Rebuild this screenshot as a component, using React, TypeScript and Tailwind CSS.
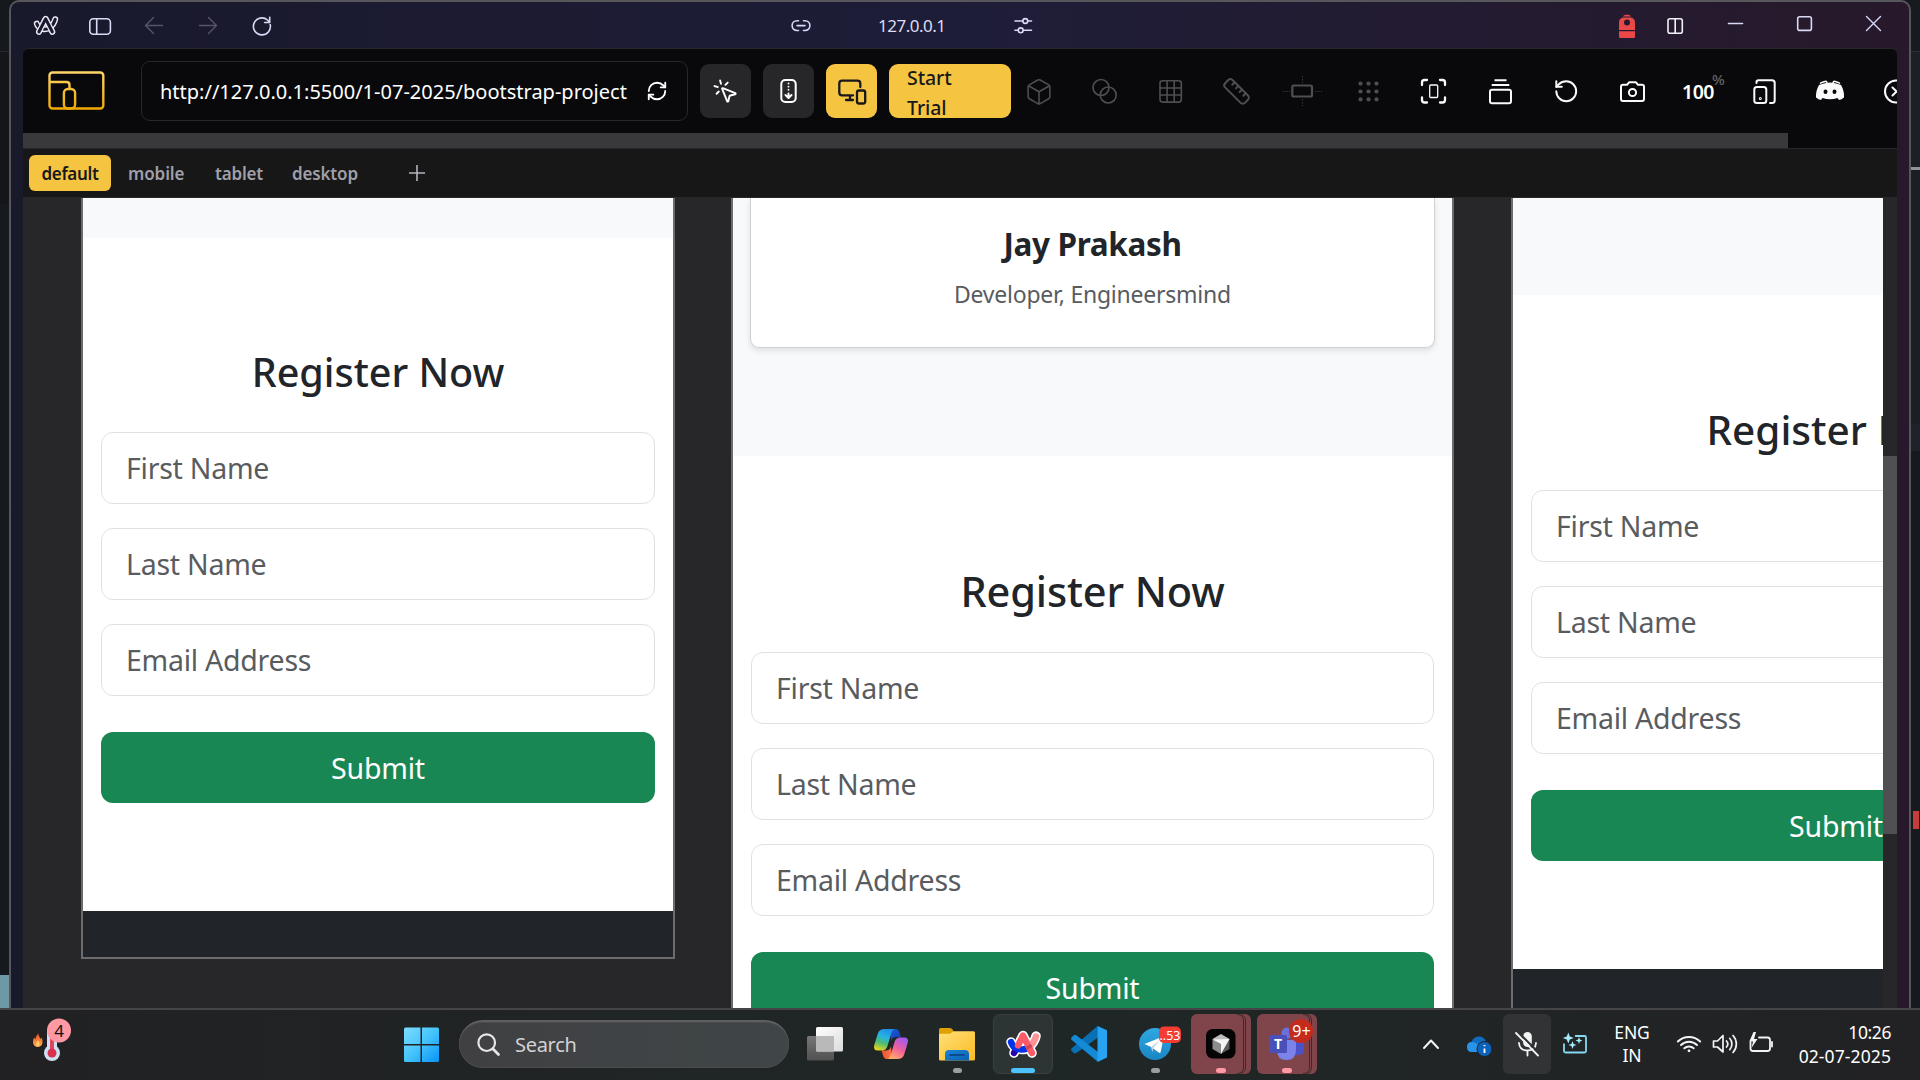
import React from "react";
import { Box, Ruler, RotateCcw, RefreshCw, MousePointerClick } from "lucide-react";

type GlyphProps = { x: number; className?: string; w: number; children: React.ReactNode };

/* ---------- title bar ---------- */

function TitleGlyph({ x, w, className = "", children }: GlyphProps) {
  return (
    <svg className={`h-[46px] shrink-0 ${className}`} viewBox={`${x} 2 ${w} 46`} fill="none" stroke="#d9d9f5" strokeWidth={1.6} strokeLinecap="round" strokeLinejoin="round">
      {children}
    </svg>
  );
}

const ARC_PATHS = ["M1011 1042C1013 1049 1023 1052 1029 1047C1033 1044 1035 1040 1036 1036", "M1014 1053L1023 1035.500L1032 1053"];

function TitleBar() {
  return (
    <div className="flex h-[46px] shrink-0 items-center pl-2">
      <TitleGlyph x={19} w={54} className="w-[54px]">
        <g transform="translate(46 25.500) scale(.74) translate(-1023.500 -1044.500)">
          {ARC_PATHS.map((d) => <path key={d} d={d} strokeWidth={8} stroke="#e8e8f2" />)}
          <path d={ARC_PATHS[0]} strokeWidth={4.200} stroke="#1a1930" />
          <path d={ARC_PATHS[1]} strokeWidth={7.600} stroke="#e8e8f2" />
          <path d={ARC_PATHS[1]} strokeWidth={4.200} stroke="#1a1930" />
        </g>
      </TitleGlyph>
      <TitleGlyph x={73} w={54} className="w-[54px]">
        <rect x={89.800} y={18.800} width={20.600} height={15.400} rx={3.500} />
        <path d="M96.700 19V34" />
      </TitleGlyph>
      <TitleGlyph x={127} w={54} className="w-[54px]">
        <path d="M162.500 25.500H145.500M153.500 17.500L145.500 25.500L153.500 33.500" stroke="#55546c" strokeWidth={1.400} />
      </TitleGlyph>
      <TitleGlyph x={181} w={54} className="w-[54px]">
        <path d="M199.500 25.500H216.500M208.500 17.500L216.500 25.500L208.500 33.500" stroke="#55546c" strokeWidth={1.400} />
      </TitleGlyph>
      <TitleGlyph x={235} w={54} className="w-[54px]">
        <path d="M270.200 24.500A8.500 8.500 0 1 1 267.500 20L269.500 22.300M269.700 17.300V22.500H264.600" />
      </TitleGlyph>
      <TitleGlyph x={785} w={32} className="ml-[496px] w-[32px]">
        <path d="M798.500 20.700H797A4.900 4.900 0 0 0 797 30.500H798.500M803.500 20.700H805A4.900 4.900 0 0 1 805 30.500H803.500M797 25.600H805" />
      </TitleGlyph>
      <span className="ml-[61px] w-[69px] font-['Noto_Sans'] text-[17px] leading-none tracking-[-0.5px] text-[#dcdcf4]">127.0.0.1</span>
      <TitleGlyph x={1007} w={32} className="ml-[60px] w-[32px]">
        <path d="M1015 21H1022.500M1028 21H1031.500M1015 30.300H1018M1023.500 30.300H1031.500" />
        <circle cx={1025.300} cy={21} r={2.400} />
        <circle cx={1020.700} cy={30.300} r={2.400} />
      </TitleGlyph>
      <TitleGlyph x={1611} w={32} className="ml-[572px] w-[32px]">
        <g fill="#ea4848" stroke="none">
          <path d="M1623 16.500C1623.500 14 1630.500 14 1631 16.500Z" />
          <path fillRule="evenodd" d="M1619 30V23Q1619 17.500 1624 17.500H1630Q1635 17.500 1635 23V30ZM1630 22.400A3 3 0 1 0 1624 22.400A3 3 0 1 0 1630 22.400Z" />
          <path d="M1619 31.300H1635V36.800Q1635 38 1633.800 38H1620.200Q1619 38 1619 36.800Z" />
        </g>
      </TitleGlyph>
      <TitleGlyph x={1659} w={32} className="ml-4 w-[32px]">
        <rect x={1668} y={18.700} width={14.300} height={14.600} rx={2} stroke="#f2f2f8" />
        <path d="M1675.200 19V33" stroke="#f2f2f8" />
      </TitleGlyph>
      <TitleGlyph x={1719} w={32} className="ml-[28px] w-[32px]"><path d="M1728.500 23.500H1742.500" /></TitleGlyph>
      <TitleGlyph x={1788} w={32} className="ml-[37px] w-[32px]"><rect x={1797.700} y={16.700} width={13.700} height={13.700} rx={2} /></TitleGlyph>
      <TitleGlyph x={1857} w={32} className="ml-[37px] w-[32px]"><path d="M1866.500 16.500L1880.500 30.500M1880.500 16.500L1866.500 30.500" strokeWidth={1.400} /></TitleGlyph>
    </div>
  );
}

/* ---------- toolbar ---------- */

const TOOL_START = 1011;
const TOOL_W = 66;

function ToolGlyph({ i, dim, children }: { i: number; dim?: boolean; children: React.ReactNode }) {
  return (
    <svg className={dim ? "h-12 w-[66px] shrink-0 text-[#4f4f52]" : "h-12 w-[66px] shrink-0 text-[#fafafa]"} viewBox={`${TOOL_START + TOOL_W * i} 67 ${TOOL_W} 48`} fill="none" stroke="currentColor" strokeWidth={dim ? 1.600 : 2} strokeLinecap="round" strokeLinejoin="round">
      {children}
    </svg>
  );
}

function Toolbar() {
  return (
    <div className="flex h-[84px] shrink-0 items-center overflow-hidden pl-[23px]">
      <svg className="h-12 w-[62px] shrink-0" viewBox="46 67 62 48" fill="none" strokeWidth={2.400}>
        <defs>
          <linearGradient id="logo" gradientUnits="userSpaceOnUse" x1="0" y1="71" x2="0" y2="110">
            <stop offset="0" stopColor="#ffd66b" />
            <stop offset="1" stopColor="#f0a800" />
          </linearGradient>
        </defs>
        <g stroke="url(#logo)">
          <rect x={49.500} y={72.500} width={53.800} height={36} rx={3} />
          <path d="M50 82H66.500Q69.500 82 69.500 85V88.500" />
          <rect x={63.900} y={89} width={11.200} height={19.500} rx={4} />
        </g>
      </svg>
      <div className="ml-[33px] flex h-[60px] w-[547px] shrink-0 items-center rounded-[9px] border border-[#27272a] pl-[18px]">
        <span className="w-[470px] whitespace-nowrap pt-[2px] font-['Noto_Sans'] text-[20px] leading-[30px] text-white">http://127.0.0.1:5500/1-07-2025/bootstrap-project</span>
        <RefreshCw className="ml-[16px] text-white" size={22} strokeWidth={2} />
      </div>
      <div className="ml-[12px] flex h-[54px] w-[51px] shrink-0 items-center justify-center rounded-[9px] bg-[#27272a] text-white">
        <MousePointerClick size={27} strokeWidth={1.700} />
      </div>
      <div className="ml-3 flex h-[54px] w-[51px] shrink-0 items-center justify-center rounded-[9px] bg-[#27272a]">
        <svg className="h-[26px] w-[20px]" viewBox="778.500 78 20 26" fill="none" stroke="#fff" strokeWidth={2} strokeLinecap="round" strokeLinejoin="round">
          <rect x={780.800} y={80} width={14.400} height={22} rx={4} />
          <path d="M788 93.500V97.500M785 95L788 98L791 95" />
          <path d="M788 83.500V92.500" strokeDasharray="0.1 3" strokeWidth={1.800} />
        </svg>
      </div>
      <div className="ml-3 flex h-[54px] w-[51px] shrink-0 items-center justify-center rounded-[9px] bg-[#f5c542]">
        <svg className="h-[32px] w-[32px]" viewBox="836 75 32 32" fill="none" stroke="#18181b" strokeWidth={2.300} strokeLinecap="round" strokeLinejoin="round">
          <path d="M860.300 87V83.500Q860.300 80.700 857.500 80.700H842Q839.300 80.700 839.300 83.500V92.500Q839.300 95.300 842 95.300H853M850 95.500V100M846 100H853" />
          <rect x={857} y={90.500} width={8.200} height={13} rx={2} />
        </svg>
      </div>
      <div className="ml-3 flex h-[54px] w-[122px] shrink-0 items-center rounded-[9px] bg-[#f5c542] pl-[18px]">
        <span className="w-[60px] pt-[3px] font-['Noto_Sans'] text-[19.5px] font-medium leading-[30px] tracking-[-0.1px] text-[#18181b]">Start Trial</span>
      </div>
      <ToolGlyph i={0} dim><Box x={1024.500} y={77.300} size={29} strokeWidth={1.300} /></ToolGlyph>
      <ToolGlyph i={1} dim>
        <circle cx={1101} cy={87.500} r={8} />
        <circle cx={1108.200} cy={95} r={8} />
      </ToolGlyph>
      <ToolGlyph i={2} dim>
        <rect x={1160} y={80.800} width={21.300} height={21.300} rx={2.500} />
        <path d="M1167.100 81V102M1174.200 81V102M1160 88H1181M1160 95H1181" />
      </ToolGlyph>
      <ToolGlyph i={3} dim><Ruler x={1221.800} y={76.700} size={29.500} strokeWidth={1.600} /></ToolGlyph>
      <ToolGlyph i={4} dim>
        <rect x={1292.300} y={85.500} width={19.700} height={11} rx={1.500} strokeWidth={2.200} />
        <path d="M1283 91.500H1290M1315 91.500H1322M1302.500 76V83M1302.500 99V106" strokeDasharray="1.500 1.500" strokeWidth={1} strokeLinecap="butt" strokeOpacity={0.7} />
      </ToolGlyph>
      <ToolGlyph i={5} dim>
        {[83.600, 91.500, 99.400].map((y) => [1360.500, 1368.500, 1376.500].map((x) => <circle key={`${x}-${y}`} cx={x} cy={y} r={2.100} fill="#4f4f52" stroke="none" />))}
      </ToolGlyph>
      <ToolGlyph i={6}>
        <path d="M1422 85V82.500Q1422 80 1424.500 80H1427M1440 80H1442.500Q1445 80 1445 82.500V85M1445 97.500V100Q1445 102.500 1442.500 102.500H1440M1427 102.500H1424.500Q1422 102.500 1422 100V97.500" strokeWidth={2.300} />
        <rect x={1429.700} y={85} width={8} height={12.500} rx={1} strokeWidth={1.300} />
      </ToolGlyph>
      <ToolGlyph i={7}>
        <path d="M1494.500 80.300H1506.500M1491.700 85H1509.300" strokeLinecap="butt" />
        <rect x={1490} y={89.700} width={21} height={13.500} rx={2} />
      </ToolGlyph>
      <ToolGlyph i={8}><RotateCcw x={1553} y={78} size={26.500} strokeWidth={1.800} /></ToolGlyph>
      <ToolGlyph i={9}>
        <path d="M1623 84.800H1627L1629 82.300H1636L1638 84.800H1642Q1644 84.800 1644 86.800V99Q1644 101 1642 101H1623Q1621 101 1621 99V86.800Q1621 84.800 1623 84.800Z" />
        <circle cx={1632.500} cy={92.500} r={3.600} />
      </ToolGlyph>
      <div className="relative flex h-12 w-[66px] shrink-0 items-center pl-[11px]">
        <span className="pt-[2px] font-['Noto_Sans'] text-[19.5px] font-semibold leading-[30px] tracking-[-0.5px] text-white">100</span>
        <span className="absolute left-[41px] top-[2px] font-['Noto_Sans'] text-[15px] font-medium leading-[20px] text-[#636366]">%</span>
      </div>
      <ToolGlyph i={11}>
        <path d="M1756.500 83V82Q1756.500 80.300 1758.500 80.300H1772Q1774.700 80.300 1774.700 83V100.500Q1774.700 103 1772 103H1770" />
        <rect x={1754.300} y={87} width={12} height={16} rx={2.500} />
        <circle cx={1760.300} cy={98.500} r={0.500} />
      </ToolGlyph>
      <ToolGlyph i={12}>
        <path fill="#fafafa" stroke="none" fillRule="evenodd" d="M1822 84Q1830 80.800 1838 84L1841 85Q1844.500 91 1844 97.500Q1841.500 99.800 1839 100L1837.500 98Q1830 100.700 1822.500 98L1821 100Q1818.500 99.800 1816 97.500Q1815.500 91 1819 85ZM1827.500 91.700A2 2.300 0 1 0 1823.500 91.700A2 2.300 0 1 0 1827.500 91.700ZM1836.500 91.700A2 2.300 0 1 0 1832.500 91.700A2 2.300 0 1 0 1836.500 91.700Z" />
        <path strokeWidth={1.500} d="M1820.500 83.200Q1823 81.800 1826 81.300L1827 82.500M1839.500 83.200Q1837 81.800 1834 81.300L1833 82.500" />
      </ToolGlyph>
      <ToolGlyph i={13}>
        <circle cx={1896} cy={91.500} r={11} />
        <path d="M1892.500 87.500L1896.500 91.500L1892.500 95.500" />
      </ToolGlyph>
    </div>
  );
}

function Tabs() {
  const tab = "flex h-9 items-center rounded-md pt-px font-['Noto_Sans'] text-[17px] font-semibold leading-none";
  return (
    <div className="flex h-[50px] shrink-0 items-center border-b border-t border-[#27272a] bg-[#171717] pl-[6px]">
      <div className={`${tab} w-[82px] justify-center bg-[#f5c542] tracking-[-0.35px] text-[#18181b]`}>default</div>
      <div className={`${tab} ml-[17px] w-[87px] tracking-[-0.1px] text-[#9f9fa9]`}>mobile</div>
      <div className={`${tab} w-[77px] tracking-[-0.2px] text-[#9f9fa9]`}>tablet</div>
      <div className={`${tab} w-[117px] tracking-[-0.15px] text-[#9f9fa9]`}>desktop</div>
      <svg className="h-4 w-4" viewBox="0 0 16 16" stroke="#b4b4bc" strokeWidth={1.600}>
        <path d="M8 0V16M0 8H16" />
      </svg>
    </div>
  );
}

/* ---------- device previews ---------- */

function Field({ label }: { label: string }) {
  return (
    <div className="flex h-[72px] shrink-0 items-center rounded-xl border border-[#dee2e6] pl-6 pt-px font-['Noto_Sans'] text-[28.5px] leading-none tracking-[-0.25px] text-[#595c5f]">
      {label}
    </div>
  );
}

function RegisterForm({ title }: { title: string }) {
  return (
    <div className="flex flex-col px-[18px] pt-[109px]">
      <h2 className={title}>Register Now</h2>
      <div className="mt-[35px] flex flex-col gap-6">
        <Field label="First Name" />
        <Field label="Last Name" />
        <Field label="Email Address" />
      </div>
      <div className="mt-9 flex h-[71px] shrink-0 items-center justify-center rounded-xl bg-[#198754] pt-[2px] font-['Noto_Sans'] text-[28.5px] leading-none tracking-[-0.2px] text-white">
        Submit
      </div>
    </div>
  );
}

const heading = "whitespace-nowrap text-center font-['Noto_Sans'] font-medium text-[#212529]";

function Canvas() {
  return (
    <div className="flex h-[810px] shrink-0 bg-[#272729]">
      <div className="flex w-[1860px] gap-[57px] overflow-hidden pl-[58px]">
        <div className="flex h-[761px] w-[594px] shrink-0 flex-col border-2 border-t-0 border-[#6c6c6e] bg-white">
          <div className="h-10 shrink-0 bg-[#f8f9fa]" />
          <div className="h-[673px] shrink-0">
            <RegisterForm title={`${heading} h-[50px] text-[39.5px] leading-[50px]`} />
          </div>
          <div className="grow bg-[#212529]" />
        </div>
        <div className="-ml-px flex h-[900px] w-[723px] shrink-0 flex-col border-x-2 border-[#6c6c6e] bg-white">
          <div className="h-[258px] shrink-0 overflow-hidden bg-[#f8f9fa] px-[17px]">
            <div className="flex h-[150px] flex-col items-center rounded-b-[9px] border border-t-0 border-[#cfd1d3] bg-white font-['Noto_Sans'] shadow-[0_3px_6px_rgba(0,0,0,0.1)]">
              <div className="mt-[26px] text-[31.500px] font-bold leading-[40px] tracking-[-0.35px] text-[#212529]">Jay Prakash</div>
              <div className="mt-[12px] text-[23px] leading-[36px] tracking-[-0.23px] text-[#595c5f]">Developer, Engineersmind</div>
            </div>
          </div>
          <RegisterForm title={`${heading} h-[52px] text-[41.500px] leading-[52px] tracking-[-0.1px]`} />
        </div>
        <div className="flex h-[900px] w-[650px] shrink-0 flex-col border-x-2 border-[#6c6c6e] bg-white">
          <div className="h-[97px] shrink-0 bg-[#f8f9fa]" />
          <div className="h-[674px] shrink-0">
            <RegisterForm title={`${heading} h-[51px] text-[40.500px] leading-[51px]`} />
          </div>
          <div className="grow bg-[#212529]" />
        </div>
      </div>
      <div className="w-[14px] pt-[258px]">
        <div className="h-[378px] bg-[#505052]" />
      </div>
    </div>
  );
}

/* ---------- taskbar ---------- */

function TaskGlyph({ x, w, className = "", children }: GlyphProps) {
  return (
    <svg className={`h-[70px] shrink-0 ${className}`} viewBox={`${x} 1010 ${w} 70`} fill="none">
      {children}
    </svg>
  );
}

function AlertTile({ x }: { x: number }) {
  return (
    <g>
      <rect x={x} y={1014} width={60} height={60} rx={6} fill="#80454b" />
      <path d={`M${x + 46} 1014.500Q${x + 52.500} 1014.500 ${x + 52.500} 1021V1067Q${x + 52.500} 1073.500 ${x + 46} 1073.500`} stroke="#3c2a2d" strokeWidth={1} />
      <path d={`M${x + 50} 1014.500Q${x + 54.500} 1015.500 ${x + 54.500} 1021V1067Q${x + 54.500} 1072.500 ${x + 50} 1073.500`} stroke="#3c2a2d" strokeWidth={1} />
      <rect x={x + 25} y={1068} width={10} height={5} rx={2.500} fill="#ff99a4" />
    </g>
  );
}

function Taskbar() {
  return (
    <div className="flex h-[72px] items-center border-t-2 border-[#454547] bg-linear-to-r from-[#212123] via-[#1f2726] via-55% to-[#222224] font-['Noto_Sans'] text-white">
      <TaskGlyph x={24} w={60} className="ml-6 w-[60px]">
        <defs>
          <linearGradient id="flame" x1="0" y1="0" x2="0" y2="1"><stop offset="0" stopColor="#f0512a" /><stop offset="1" stopColor="#ffb04a" /></linearGradient>
        </defs>
        <path d="M37.500 1047C33 1047 32 1041.500 34 1037.500L35.500 1039.500C35.500 1036.500 37 1035 38.500 1033.500C38.500 1036.500 40 1037.500 40.500 1039L41.500 1037.500C43.500 1041.500 43 1047 37.500 1047Z" fill="url(#flame)" />
        <path d="M37.800 1046C35.800 1045.500 35.800 1042.500 38 1040.500C39.500 1042 40.500 1045.500 37.800 1046Z" fill="#ffd070" />
        <rect x={47} y={1026} width={10} height={28} rx={5} fill="#cfe0f5" />
        <circle cx={52} cy={1053} r={8} fill="#cfe0f5" />
        <rect x={50} y={1036} width={4} height={16} fill="#e0455c" />
        <circle cx={52} cy={1053} r={4.500} fill="#d8304f" />
        <circle cx={59} cy={1030.500} r={12} fill="#ff99a4" />
        <text x={59} y={1036.500} fill="#111" fontFamily="Noto Sans" fontSize={17} textAnchor="middle">4</text>
      </TaskGlyph>
      <TaskGlyph x={404} w={36} className="ml-[320px] w-9">
        <defs>
          <linearGradient id="win" gradientUnits="userSpaceOnUse" x1="404" y1="1027" x2="439" y2="1062"><stop offset="0" stopColor="#7fdcff" /><stop offset=".5" stopColor="#45c4fb" /><stop offset="1" stopColor="#0893f8" /></linearGradient>
        </defs>
        <path fill="url(#win)" d="M405.500 1027.500H420.500V1044H404V1029Q404 1027.500 405.500 1027.500ZM422 1027.500H437.500Q439 1027.500 439 1029V1044H422ZM404 1045.500H420.500V1062H405.500Q404 1062 404 1060.500ZM422 1045.500H439V1060.500Q439 1062 437.500 1062H422Z" />
      </TaskGlyph>
      <div className="mb-[2px] ml-[19px] flex h-12 w-[330px] shrink-0 items-center rounded-full border-t-2 border-[#5f5f62] bg-linear-to-r from-[#404043] to-[#3f4647] pl-[18px] shadow-[inset_0_0_0_1px_#4b4b4e]">
        <svg className="h-6 w-6" viewBox="0 0 24 24" fill="none" stroke="#e6e6e8" strokeLinecap="round">
          <circle cx={9.700} cy={9.700} r={8.300} strokeWidth={2.200} />
          <path d="M15.800 15.800L21.500 21.500" strokeWidth={2.800} />
        </svg>
        <span className="ml-[14px] text-[20px] leading-none tracking-[-0.3px] text-[#d2d2d3]">Search</span>
      </div>
      <TaskGlyph x={802} w={46} className="ml-[13px] w-[46px]">
        <defs>
          <linearGradient id="tvd" x1="0" y1="0" x2="0" y2="1"><stop offset="0" stopColor="#777" /><stop offset="1" stopColor="#505050" /></linearGradient>
          <linearGradient id="tvl" x1="0" y1="0" x2="1" y2="1"><stop offset="0" stopColor="#fff" /><stop offset="1" stopColor="#dcdcdc" /></linearGradient>
        </defs>
        <rect x={807} y={1036} width={27} height={24.500} rx={1.500} fill="url(#tvd)" />
        <rect x={816} y={1027} width={27} height={24.500} rx={1.500} fill="url(#tvl)" />
        <path d="M816 1036H834V1051.500H817.500Q816 1051.500 816 1050Z" fill="#b9b9ba" />
      </TaskGlyph>
      <TaskGlyph x={868} w={46} className="ml-5 w-[46px]">
        <defs>
          <linearGradient id="cpa" x1="0.600" y1="0" x2="0.300" y2="1"><stop offset="0" stopColor="#1f8fe8" /><stop offset=".35" stopColor="#25b3e2" /><stop offset=".65" stopColor="#4dbb74" /><stop offset="1" stopColor="#e8d51e" /></linearGradient>
          <linearGradient id="cpb" x1="0.700" y1="0" x2="0.200" y2="1"><stop offset="0" stopColor="#a45af0" /><stop offset=".5" stopColor="#f0609a" /><stop offset="1" stopColor="#ffb06a" /></linearGradient>
          <linearGradient id="cpc" x1="0" y1="0" x2="1" y2="1"><stop offset="0" stopColor="#1a5fd8" /><stop offset="1" stopColor="#1638b0" /></linearGradient>
          <linearGradient id="cpd" x1="0" y1="0" x2="1" y2="0"><stop offset="0" stopColor="#e8502e" /><stop offset="1" stopColor="#ff7a4a" /></linearGradient>
        </defs>
        <path d="M890 1029H895.500Q898.500 1029 899.500 1032.500L901 1037H896Q892 1037 891 1041Z" fill="url(#cpc)" />
        <path d="M892 1059H887Q884 1059 883 1055.500L881.500 1050.500H886Q890 1050.500 891 1046.500Z" fill="url(#cpd)" />
        <path d="M884.500 1029H894Q892 1030 891 1034L887.500 1046Q886 1050.500 882 1050.500H878Q872.800 1050.500 874.300 1045L878 1033Q879.500 1029 884.500 1029Z" fill="url(#cpa)" />
        <path d="M897.500 1059H888Q890 1058 891 1054L894.500 1042Q896 1037.500 900 1037.500H904Q909.200 1037.500 907.700 1043L904 1055Q902.500 1059 897.500 1059Z" fill="url(#cpb)" />
      </TaskGlyph>
      <TaskGlyph x={934} w={46} className="ml-5 w-[46px]">
        <defs>
          <linearGradient id="fol" x1="0" y1="0" x2="1" y2="1"><stop offset="0" stopColor="#ffe07a" /><stop offset="1" stopColor="#fbbb22" /></linearGradient>
          <linearGradient id="fob" x1="0" y1="0" x2="1" y2="1"><stop offset="0" stopColor="#1a86d9" /><stop offset="1" stopColor="#0a5fb0" /></linearGradient>
        </defs>
        <path d="M939 1040V1029.500Q939 1028 940.500 1028H950Q951.500 1028 952.500 1029.500L954 1032V1040Z" fill="#dfa000" />
        <path d="M939 1035Q939 1033.800 940.500 1033.800H950L953.500 1031.300H973.500Q975 1031.300 975 1032.800V1059Q975 1060.500 973.500 1060.500H940.500Q939 1060.500 939 1059Z" fill="url(#fol)" />
        <path d="M945 1060.500V1054Q945 1050 949 1050H965Q969 1050 969 1054V1060.500Z" fill="url(#fob)" />
        <path d="M950 1055H964" stroke="#0a4a8c" strokeWidth={1.800} strokeLinecap="round" />
        <rect x={953} y={1068} width={9} height={5} rx={2.500} fill="#9c9e9e" />
      </TaskGlyph>
      <TaskGlyph x={993} w={60} className="ml-[13px] w-[60px]">
        <rect x={993.500} y={1014.500} width={59} height={59} rx={6} fill="#2d3434" stroke="#3a4040" />
        <g strokeLinecap="round" strokeLinejoin="round" strokeWidth={6.400}>
          {ARC_PATHS.map((d) => <path key={d} d={d} stroke="#fff" strokeWidth={9.500} />)}
          <path d="M1028 1047.500C1033 1044 1035 1040 1036 1036.500" stroke="#ff9396" />
          <path d="M1017.500 1046.500L1014 1053" stroke="#2804a8" />
          <path d="M1011 1042C1013 1049 1021 1051 1027 1048.500" stroke="#0333e8" />
          <path d="M1018 1045.500L1023 1035.500L1032 1053" stroke="#fb5a68" />
          <path d="M1028 1045.500L1029.500 1048.500" stroke="#c94a58" strokeLinecap="butt" />
        </g>
        <rect x={1011} y={1068} width={24} height={5} rx={2.500} fill="#4cc2ff" />
      </TaskGlyph>
      <TaskGlyph x={1066} w={46} className="ml-[13px] w-[46px]">
        <path d="M1097.500 1026L1098 1037.500L1076 1053.300L1074 1053.300L1071.200 1050.500V1048.700Z" fill="#0a70b5" />
        <path d="M1076 1035L1098 1052V1062L1071.200 1039.500V1037.800L1074 1035Z" fill="#1489d6" />
        <path d="M1097.500 1026L1107 1030.300V1057.500L1097.500 1062Z" fill="#27a3f2" />
      </TaskGlyph>
      <TaskGlyph x={1132} w={52} className="ml-5 w-[52px]">
        <defs>
          <linearGradient id="tg" x1="0" y1="0" x2="0" y2="1"><stop offset="0" stopColor="#2fa8e2" /><stop offset="1" stopColor="#1a86c4" /></linearGradient>
        </defs>
        <circle cx={1155} cy={1044} r={16} fill="url(#tg)" />
        <path d="M1144.500 1044L1163 1036.500Q1164 1036.500 1163.500 1038L1160.700 1052Q1160.300 1053.500 1158.800 1052.500L1151 1047Z" fill="#fff" />
        <path d="M1151 1047L1160 1040L1153 1048.500L1152.500 1052.500Z" fill="#b9d8ea" />
        <rect x={1159} y={1026.500} width={22} height={16.500} rx={5} fill="#f23c34" />
        <text x={1170} y={1039.500} fill="#fff" fontFamily="Noto Sans" fontSize={12.500} textAnchor="middle">..53</text>
        <rect x={1151} y={1068} width={9} height={5} rx={2.500} fill="#9c9e9e" />
      </TaskGlyph>
      <TaskGlyph x={1191} w={60} className="ml-[7px] w-[60px]">
        <AlertTile x={1191} />
        <rect x={1206} y={1029} width={29.500} height={29.500} rx={6.500} fill="#050505" />
        <path d="M1221 1034L1229.500 1039L1221 1044L1212.500 1039Z" fill="#bdbdbd" />
        <path d="M1212.500 1039L1221 1044V1054L1212.500 1049Z" fill="#8c8c8c" />
        <path d="M1229.500 1039V1049L1221 1054V1044Z" fill="#5c5c5c" />
        <path d="M1212.500 1039.500L1229.500 1039L1221 1054V1044Z" fill="#f5f5f5" />
      </TaskGlyph>
      <TaskGlyph x={1257} w={60} className="ml-[6px] w-[60px]">
        <AlertTile x={1257} />
        <rect x={1290} y={1037} width={14} height={18} rx={5} fill="#4b52c8" />
        <circle cx={1287} cy={1033} r={5.500} fill="#6a70dc" />
        <path d="M1277 1040H1296V1050Q1296 1060 1286.500 1060Q1277 1060 1277 1050Z" fill="#7b83eb" />
        <rect x={1269} y={1035} width={18} height={18} rx={1.500} fill="#4950b8" />
        <text x={1278} y={1049} fill="#fff" fontFamily="Noto Sans" fontWeight={700} fontSize={14} textAnchor="middle">T</text>
        <circle cx={1301} cy={1031} r={12} fill="#c42b1c" />
        <text x={1301.500} y={1036.500} fill="#fff" fontFamily="Noto Sans" fontSize={16} textAnchor="middle">9+</text>
      </TaskGlyph>
      <TaskGlyph x={1418} w={26} className="ml-[101px] w-[26px]">
        <path d="M1424 1048L1431 1040.500L1438 1048" stroke="#f4f4f4" strokeWidth={2} strokeLinecap="round" strokeLinejoin="round" />
      </TaskGlyph>
      <TaskGlyph x={1464} w={30} className="ml-5 w-[30px]">
        <path d="M1472 1052Q1467 1052 1467 1047Q1467 1042.500 1471.500 1042Q1473.500 1036.500 1479 1036.500Q1484.500 1036.500 1486 1042Q1490 1043 1490 1047Q1490 1052 1485.500 1052Z" fill="#0f6cc0" />
        <path d="M1472 1052Q1467 1052 1467 1047Q1467 1042.500 1471.500 1042Q1474 1041.500 1476.500 1043.500L1484 1048V1052Z" fill="#2794e8" />
        <circle cx={1484.500} cy={1049} r={7.500} fill="#0c62b8" stroke="#202324" />
        <path d="M1484.500 1048.500V1053M1484.500 1045V1046.300" stroke="#fff" strokeWidth={1.800} />
      </TaskGlyph>
      <TaskGlyph x={1503} w={48} className="ml-[9px] w-12">
        <rect x={1503} y={1014} width={48} height={60} rx={6} fill="#313335" />
        <rect x={1523.200} y={1032} width={8.600} height={15} rx={4.300} fill="#f4f4f4" />
        <path d="M1519 1043Q1519.500 1050.500 1527.500 1050.500Q1535.500 1050.500 1536 1043M1527.500 1051V1055.500" stroke="#f4f4f4" strokeWidth={1.800} strokeLinecap="round" />
        <path d="M1517.500 1031.500L1540 1054" stroke="#313335" strokeWidth={2} />
        <path d="M1516 1033L1538 1055.500" stroke="#f4f4f4" strokeWidth={1.800} strokeLinecap="round" />
      </TaskGlyph>
      <TaskGlyph x={1560} w={30} className="ml-[9px] w-[30px]">
        <path d="M1575 1036H1584.500Q1586 1036 1586 1037.500V1051Q1586 1052.500 1584.500 1052.500H1565.500Q1564 1052.500 1564 1051V1043.500" stroke="#86d9f3" strokeWidth={1.800} />
        <path d="M1568.300 1032.500L1569.800 1036.500L1573.800 1038L1569.800 1039.500L1568.300 1043.500L1566.800 1039.500L1562.800 1038L1566.800 1036.500ZM1572.500 1041L1573.600 1044L1576.500 1045L1573.600 1046L1572.500 1049L1571.400 1046L1568.500 1045L1571.400 1044ZM1579 1037L1579.900 1039.600L1582.500 1040.500L1579.900 1041.400L1579 1044L1578.100 1041.400L1575.500 1040.500L1578.100 1039.600Z" fill="#a6ecff" />
      </TaskGlyph>
      <div className="mb-[2px] ml-[20px] w-[44px] text-center text-[17.500px] leading-[23px] tracking-[-0.1px]">
        <div>ENG</div>
        <div>IN</div>
      </div>
      <TaskGlyph x={1674} w={30} className="ml-5 w-[30px]">
        <g stroke="#f4f4f4" strokeWidth={1.900} strokeLinecap="round">
          <path d="M1677.800 1041.500A16 16 0 0 1 1700.200 1041.500M1681 1045A11.500 11.500 0 0 1 1697 1045M1684.300 1048.300A7 7 0 0 1 1693.700 1048.300" />
          <circle cx={1689} cy={1050.800} r={1.400} fill="#f4f4f4" stroke="none" />
        </g>
      </TaskGlyph>
      <TaskGlyph x={1710} w={30} className="ml-[6px] w-[30px]">
        <g stroke="#f4f4f4" strokeWidth={1.700} strokeLinecap="round" strokeLinejoin="round">
          <path d="M1713.500 1041H1717.500L1723 1035.500V1052L1717.500 1047H1713.500Z" />
          <path d="M1726.500 1041A4.500 4.500 0 0 1 1726.500 1047M1729.700 1038.300A8.500 8.500 0 0 1 1729.700 1049.700M1733 1035.500A12.500 12.500 0 0 1 1733 1052.500" />
        </g>
      </TaskGlyph>
      <TaskGlyph x={1746} w={30} className="ml-[6px] w-[30px]">
        <path d="M1759 1037.500H1767.500Q1770 1037.500 1770 1040V1048.500Q1770 1051 1767.500 1051H1753Q1750.500 1051 1750.500 1048.500V1042M1772 1042V1046.500" stroke="#f4f4f4" strokeWidth={1.800} strokeLinecap="round" />
        <path d="M1753.500 1032L1749.300 1041.500H1753L1751.500 1048L1757.500 1039H1754L1756 1032Z" fill="#f4f4f4" />
      </TaskGlyph>
      <div className="mb-[2px] ml-[14px] w-[101px] whitespace-nowrap text-right text-[17.500px] leading-[24px] tracking-[0.1px]">
        <div className="tracking-[-0.4px]">10:26</div>
        <div>02-07-2025</div>
      </div>
    </div>
  );
}

export default function App() {
  return (
    <div className="flex h-[1080px] w-[1920px] flex-col overflow-hidden bg-[#14171b]">
      <div className="flex h-[1008px] shrink-0">
        <div className="flex w-[9px] flex-col">
          <div className="h-[52px] border-b border-[#25292e] bg-[#15181c]" />
          <div className="h-[152px] bg-[#14161a]" />
          <div className="grow bg-[#16191e]" />
          <div className="h-[33px] bg-[#6d98a6]" />
        </div>
        <div className="flex w-[1902px] flex-col overflow-hidden rounded-t-[10px] border-2 border-b-0 border-[#57575b] bg-linear-to-r from-[#19192c] via-[#1e1d38] via-50% to-[#27192b]">
          <TitleBar />
          <div className="ml-[12px] mr-[12px] flex h-[960px] flex-col overflow-hidden rounded-t-[6px] border-t border-[#27272a] bg-[#09090b]">
            <Toolbar />
            <div className="h-[15px] w-[1765px] shrink-0 bg-[#39393b]" />
            <Tabs />
            <Canvas />
          </div>
        </div>
        <div className="flex w-[9px] flex-col bg-[#16191e]">
          <div className="h-[52px] border-b border-[#2b3036] bg-[#171b20]" />
          <div className="h-[115px] bg-[#1b2025]" />
          <div className="h-[3px] bg-[#8f939b]" />
          <div className="h-[254px] bg-[#1b1f24]" />
          <div className="h-[27px] bg-[#1d222b]" />
          <div className="ml-[2px] mt-[360px] h-[18px] w-[6px] bg-[#c43c3c]" />
        </div>
      </div>
      <Taskbar />
    </div>
  );
}
